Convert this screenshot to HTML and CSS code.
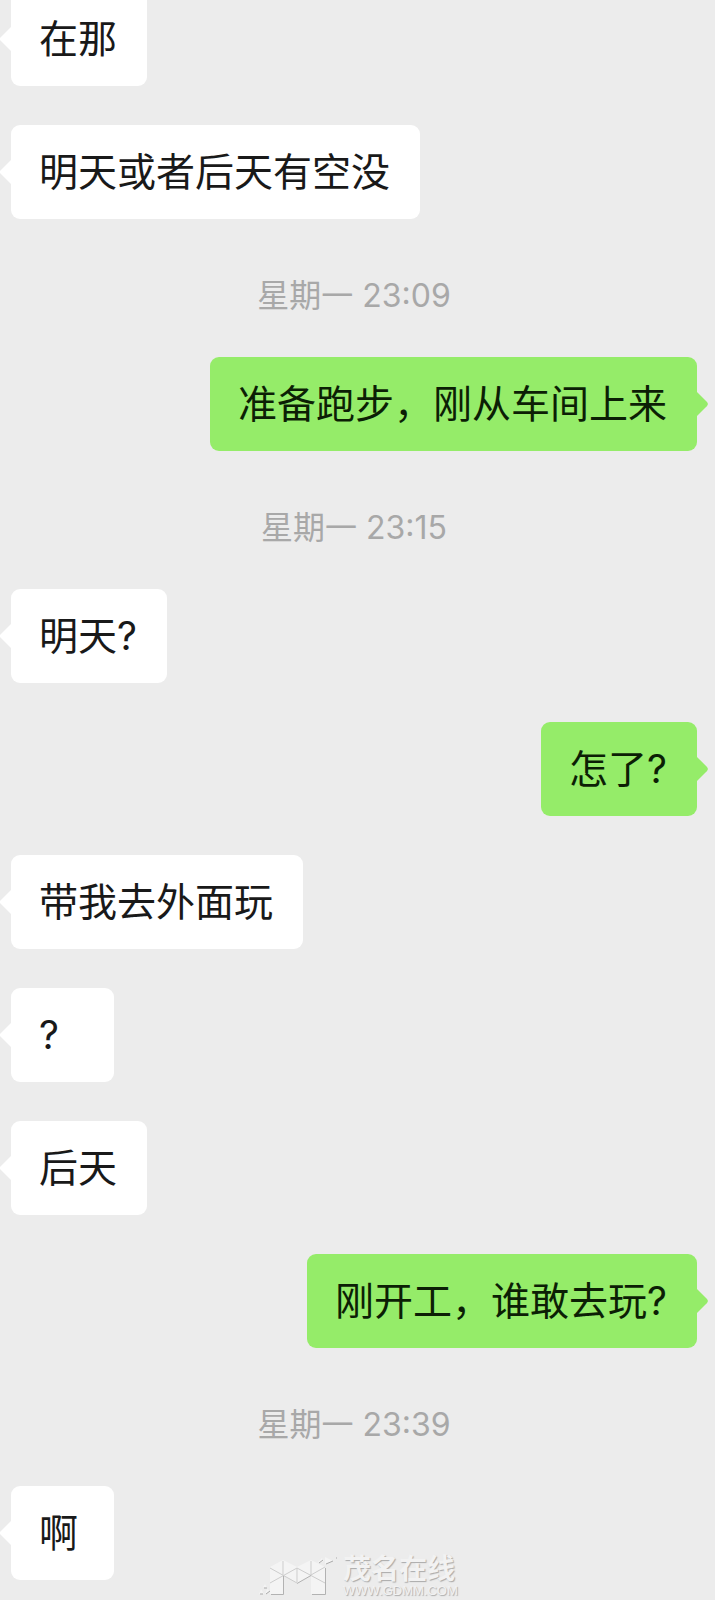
FILE: index.html
```html
<!DOCTYPE html>
<html lang="zh-CN">
<head>
  <meta charset="utf-8">
  <meta name="viewport" content="width=device-width, initial-scale=1">
  <title>聊天记录</title>
  <link rel="stylesheet" href="styles.css">
</head>
<body>
  <main class="chat">
    <div class="msg them">在那</div>
    <div class="msg them">明天或者后天有空没</div>
    <time class="stamp">星期一 23:09</time>
    <div class="msg me">准备跑步，刚从车间上来</div>
    <time class="stamp">星期一 23:15</time>
    <div class="msg them">明天?</div>
    <div class="msg me">怎了?</div>
    <div class="msg them">带我去外面玩</div>
    <div class="msg them">?</div>
    <div class="msg them">后天</div>
    <div class="msg me">刚开工，谁敢去玩?</div>
    <time class="stamp">星期一 23:39</time>
    <div class="msg them">啊</div>

    <div class="watermark">
      <svg class="wm-logo" width="80" height="42" viewBox="0 0 80 42" aria-hidden="true">
        <path d="M12 11 25 4 39 11 53 4 67 11V38H53V19L39 27 25 19V38H12z" fill="#f4f4f4"/>
        <path d="M1 38l2-5 3 5zM5 31l2-3 2 4zM7 38l2-5 3 2zM59 7l5-5 2 3zM67 1l8 4-8 3z" fill="#f4f4f4"/>
        <path d="M25 5v14M53 5v14M12 12l27 15M39 12v14M12 27l27-15M39 12l28 15M53 19l14-8" fill="none" stroke="#cdcdcd"/>
        <path d="M13 38.500H25.500V20M54 38.500H67.500V12M39 27.500l14-8" fill="none" stroke="#b2b2b2"/>
        <path d="M2 38h3M8 38l4-3M6 32h3M61 7l4-3M68 8l7-3M78 2h1" fill="none" stroke="#aaa"/>
      </svg>
      <div class="wm-text">
        <span class="wm-name">茂名在线</span>
        <span class="wm-url">WWW.GDMM.COM</span>
      </div>
    </div>
  </main>
</body>
</html>
```
FILE: styles.css
```css
* { box-sizing: border-box; }
body {
  margin: 0;
  background: #ececec;
  font-family: Inter, "Noto Sans CJK SC", sans-serif;
  color: #191919;
}
.chat {
  position: relative;
  display: flex;
  flex-direction: column;
  gap: 39px;
  min-height: 100vh;
  margin-top: -8px;
  padding: 0 18px 20px 11px;
  overflow: hidden;
}
.msg {
  position: relative;
  min-width: 103px;
  padding: 18px 30px 18px 28px;
  border-radius: 9px;
  font-size: 39px;
  line-height: 58px;
}
.them {
  align-self: flex-start;
  background: #fff;
}
.me {
  align-self: flex-end;
  background: #95ec69;
  color: #0c1f05;
}
/* bubble tails */
.msg::before {
  content: "";
  position: absolute;
  top: 34px;
  width: 12px;
  height: 26px;
  background: inherit;
}
.them::before {
  left: -11px;
  clip-path: polygon(100% 0, 0 46%, 0 54%, 100% 100%);
}
.me::before {
  right: -11px;
  clip-path: polygon(0 0, 92% 42%, 100% 50%, 92% 58%, 0 100%);
}
.stamp {
  align-self: center;
  padding-top: 16px;
  font-size: 32px;
  line-height: 44px;
  color: #a8a8a8;
}
.watermark {
  position: absolute;
  bottom: 2px;
  left: 258px;
  display: flex;
  align-items: flex-end;
  gap: 5px;
}
.wm-text {
  display: flex;
  flex-direction: column;
  color: #f2f2f2;
  text-shadow: 1px 1px 1px #aaa;
  white-space: nowrap;
}
.wm-name {
  font-size: 28px;
  font-weight: 700;
  line-height: 30px;
}
.wm-url {
  font-family: "Liberation Sans", sans-serif;
  font-size: 13px;
  line-height: 14px;
}
```
